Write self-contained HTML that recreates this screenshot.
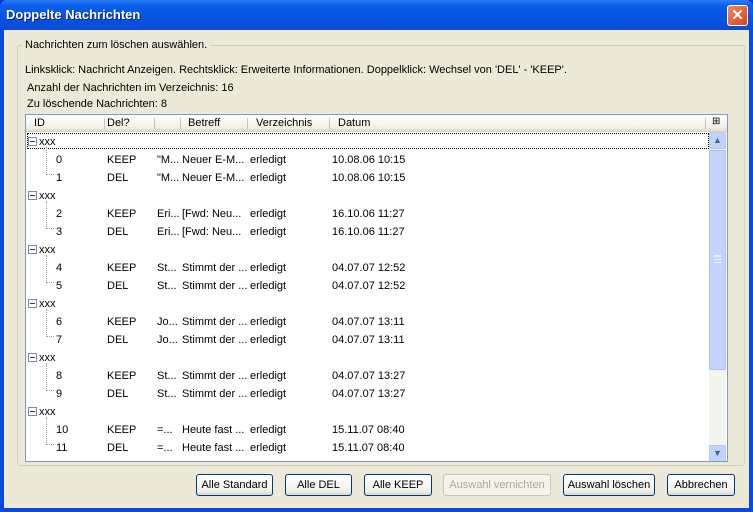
<!DOCTYPE html>
<html><head><style>
*{margin:0;padding:0;box-sizing:border-box}
body{width:753px;height:512px;overflow:hidden;font-family:"Liberation Sans",Tahoma,sans-serif;font-size:11px;color:#000;background:#0831d9;position:relative}
.frame{position:absolute;left:0;top:0;width:753px;height:512px;background:#0a48e0;border-radius:7px 7px 0 0}
.title{position:absolute;left:0;top:0;width:753px;height:30px;background:linear-gradient(#2b7bf6,#0a5ee8 20%,#0553e0 60%,#0a4bd6);border-radius:7px 7px 0 0}
.title span{position:absolute;left:6px;top:7px;color:#fff;font-weight:bold;font-size:13px;text-shadow:1px 1px #0a1f80}
.close{position:absolute;left:727px;top:5px;width:21px;height:21px;border:1px solid #fff;border-radius:3px;background:linear-gradient(135deg,#f08a68,#d9421c);color:#fff;font-weight:bold;font-size:15px;text-align:center;line-height:19px}
.client{position:absolute;left:4px;top:30px;width:745px;height:478px;background:#ece9d8}
.abs{position:absolute;white-space:nowrap}
.group{position:absolute;left:13px;top:15px;width:728px;height:421px;border:1px solid #d0d0bf;border-radius:3px}
.list{position:absolute;left:21px;top:84px;width:703px;height:348px;border:1px solid #7f9db9;background:#fff;overflow:hidden}
.hdr{position:absolute;left:0;top:0;width:701px;height:17px;background:linear-gradient(#fff,#f3f2ea 70%,#e2dfd0);border-bottom:1px solid #d6d2c2}
.hdr .s{position:absolute;top:3px;width:1px;height:11px;background:#c7c5b2}
.row{position:absolute;left:0;height:18px;width:683px}
.row .abs{top:3px}
.sb{position:absolute;left:683px;top:17px;width:17px;height:330px;background:#f3f3ef}
.btn{position:absolute;top:444px;height:22px;border:1px solid #003c74;border-radius:3px;background:linear-gradient(#fff,#f0f0ea 80%,#d8d4c8);text-align:center;line-height:20px}
.btn.dis{border-color:#c9c7ba;color:#aca899;background:#f5f4ea}
.tree{position:absolute;border-left:1px dotted #a0a0a0;border-bottom:1px dotted #a0a0a0}
.pm{position:absolute;left:2px;width:9px;height:9px;border:1px solid #7a8aa8;background:#fff}
.pm:after{content:"";position:absolute;left:1px;top:3px;width:5px;height:1px;background:#1e3c7a}
</style></head><body>
<div class="frame"></div>
<div class="title"><span>Doppelte Nachrichten</span><div class="close">✕</div></div>
<div class="client">
<div class="group"></div>
<div class="abs" style="left:18px;top:9px;background:#ece9d8;padding:0 3px">Nachrichten zum löschen auswählen.</div>
<div class="abs" style="left:21px;top:34px">Linksklick: Nachricht Anzeigen. Rechtsklick: Erweiterte Informationen. Doppelklick: Wechsel von 'DEL' - 'KEEP'.</div>
<div class="abs" style="left:23px;top:52px">Anzahl der Nachrichten im Verzeichnis: 16</div>
<div class="abs" style="left:23px;top:68px">Zu löschende Nachrichten: 8</div>
<div class="list">
<div class="hdr">
<div class="abs" style="left:8px;top:2px">ID</div><div class="s" style="left:78px"></div>
<div class="abs" style="left:81px;top:2px">Del?</div><div class="s" style="left:128px"></div>
<div class="s" style="left:154px"></div>
<div class="abs" style="left:162px;top:2px">Betreff</div><div class="s" style="left:221px"></div>
<div class="abs" style="left:230px;top:2px">Verzeichnis</div><div class="s" style="left:303px"></div>
<div class="abs" style="left:312px;top:2px">Datum</div>
<div class="s" style="left:679px"></div>
<div class="abs" style="left:686px;top:1px;font-size:10px">⊞</div>
</div>
<div class="sb">
<div style="position:absolute;left:0;top:0;width:17px;height:17px;background:#c1d3fb;border:1px solid #b6c8f0;border-radius:2px;color:#4d6185;text-align:center;font-size:9px;line-height:15px">▲</div>
<div style="position:absolute;left:0;top:18px;width:17px;height:220px;background:#c3d4fc;border:1px solid #a9bff0;border-radius:2px"><div style="position:absolute;left:4px;top:104px;width:7px;height:8px;border-top:1px solid #eef3ff;border-bottom:1px solid #eef3ff;background:linear-gradient(#eef3ff 0 1px,transparent 1px 3px,#eef3ff 3px 4px,transparent 4px 6px,#eef3ff 6px 7px,transparent 7px)"></div></div>
<div style="position:absolute;left:0;top:313px;width:17px;height:17px;background:#c1d3fb;border:1px solid #b6c8f0;border-radius:2px;color:#4d6185;text-align:center;font-size:9px;line-height:15px">▼</div>
</div>
<div style="position:absolute;left:1px;top:18px;width:682px;height:16px;border:1px dotted #000"></div>
<div id="rows"></div>
</div>
<div class="btn" style="left:192px;width:77px">Alle Standard</div>
<div class="btn" style="left:281px;width:67px">Alle DEL</div>
<div class="btn" style="left:360px;width:68px">Alle KEEP</div>
<div class="btn dis" style="left:439px;width:108px">Auswahl vernichten</div>
<div class="btn" style="left:559px;width:92px">Auswahl löschen</div>
<div class="btn" style="left:663px;width:68px">Abbrechen</div>
</div>
<script>
var g=[["0","1",'"M...',"Neuer E-M...","10.08.06 10:15"],["2","3","Eri...","[Fwd: Neu...","16.10.06 11:27"],["4","5","St...","Stimmt der ...","04.07.07 12:52"],["6","7","Jo...","Stimmt der ...","04.07.07 13:11"],["8","9","St...","Stimmt der ...","04.07.07 13:27"],["10","11","=...","Heute fast ...","15.11.07 08:40"]];
var h="",y=18;
g.forEach(function(r){
h+='<div class="row" style="top:'+y+'px"><div class="pm" style="top:4px"></div><div class="abs" style="left:13px">xxx</div></div>';
h+='<div class="tree" style="left:20px;top:'+(y+14)+'px;width:8px;height:'+(28)+'px"></div>';
y+=18;
[[r[0],"KEEP"],[r[1],"DEL"]].forEach(function(k){
h+='<div class="row" style="top:'+y+'px"><div class="abs" style="left:30px">'+k[0]+'</div><div class="abs" style="left:81px">'+k[1]+'</div><div class="abs" style="left:131px">'+r[2]+'</div><div class="abs" style="left:156px">'+r[3]+'</div><div class="abs" style="left:224px">erledigt</div><div class="abs" style="left:306px">'+r[4]+'</div></div>';
y+=18;});
});
h+='<div class="row" style="top:'+y+'px"><div class="pm" style="top:4px"></div></div>';
document.getElementById("rows").innerHTML=h;
</script>
</body></html>
